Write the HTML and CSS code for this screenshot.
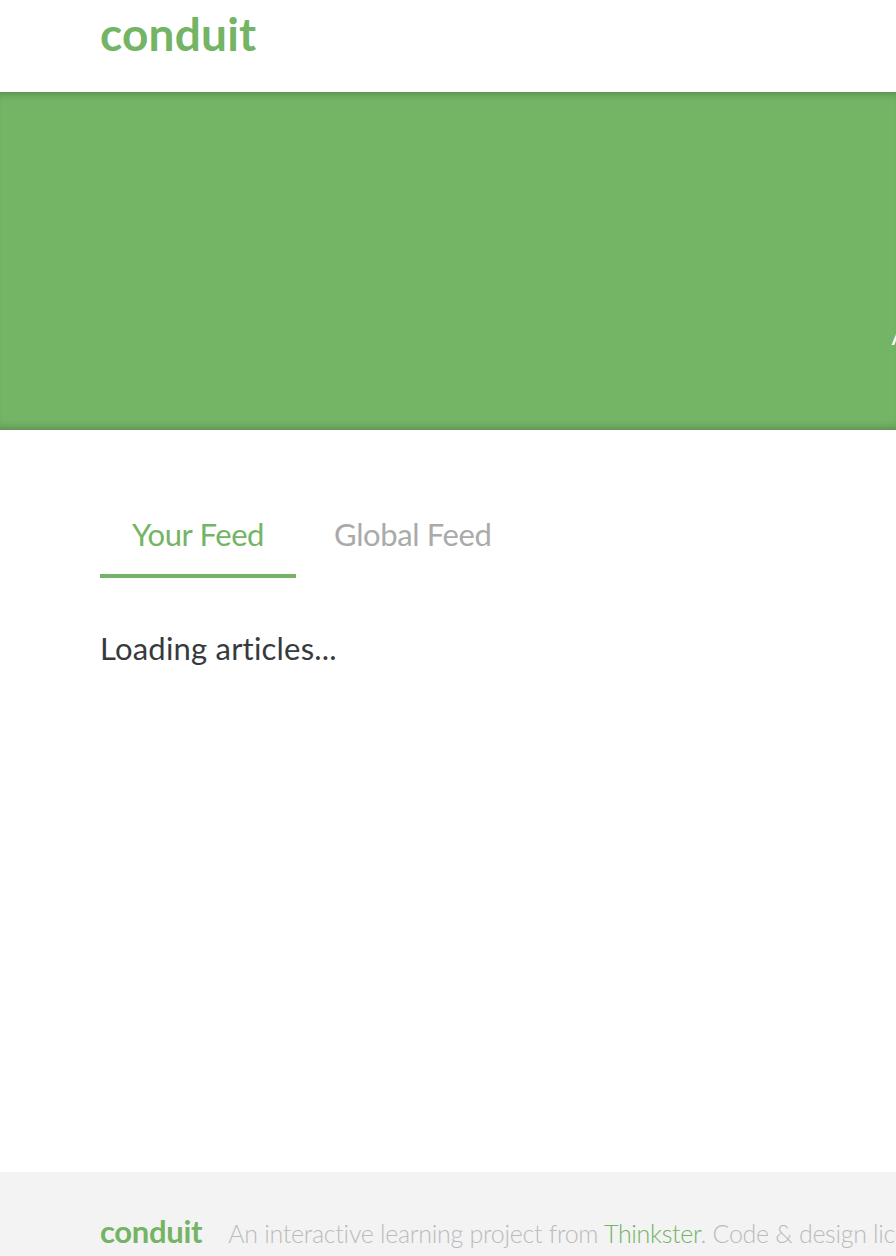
FILE: index.html
```html
<!DOCTYPE html>
<html>
<head>
<meta charset="utf-8">
<title>Conduit</title>
<link rel="stylesheet" href="styles.css">
</head>
<body>
<div class="page">
  <nav class="navbar">
    <a class="brand" href="#">conduit</a>
  </nav>
  <section class="banner">
    <p class="tagline">A place to share your knowledge.</p>
  </section>
  <main class="content">
    <ul class="tabs">
      <li class="tab active">Your Feed</li>
      <li class="tab">Global Feed</li>
    </ul>
    <div class="loading">Loading articles...</div>
  </main>
  <footer class="footer">
    <a class="footer-brand" href="#">conduit</a>
    <span class="attribution">An interactive learning project from <a class="link" href="#">Thinkster</a>. Code &amp; design licensed under MIT.</span>
  </footer>
</div>
</body>
</html>
```

FILE: styles.css
```css
html, body {
  margin: 0;
  padding: 0;
  background: #fff;
  overflow: hidden;
}
body {
  width: 896px;
  height: 1256px;
  font-family: "Lato", "Open Sans", sans-serif;
  color: #373a3c;
}
.page {
  display: flex;
  flex-direction: column;
  height: 1256px;
}
a { text-decoration: none; }

.navbar {
  height: 92px;
  box-sizing: border-box;
  padding-left: 100px;
  display: flex;
  align-items: flex-start;
}
.brand {
  font-family: "Lato", sans-serif;
  font-weight: 700;
  font-size: 46px;
  line-height: 68px;
  color: #73b465;
  letter-spacing: 0.2px;
}

.banner {
  height: 338px;
  flex: 0 0 338px;
  background: #73b465;
  box-shadow: inset 0 8px 8px -8px rgba(0,0,0,.35), inset 0 -8px 8px -8px rgba(0,0,0,.35);
  overflow: hidden;
  box-sizing: border-box;
  padding-top: 206px;
}
.tagline {
  margin: 0 0 0 891px;
  white-space: nowrap;
  color: #fff;
  font-size: 46px;
  line-height: 60px;
  font-weight: 300;
}

.content {
  flex: 1;
  padding: 0 0 0 100px;
}
.tabs {
  list-style: none;
  margin: 72px 0 0 0;
  padding: 0;
  display: flex;
}
.tab {
  font-size: 31px;
  line-height: 40px;
  padding: 12px 32px 20px 32px;
  color: #aaa;
  border-bottom: 4px solid transparent;
  letter-spacing: -0.4px;
}
.tab.active {
  color: #73b465;
  border-bottom-color: #73b465;
}
.tab + .tab { margin-left: 6px; }
.loading {
  margin-top: 50px;
  font-size: 31px;
  line-height: 40px;
  color: #373a3c;
  letter-spacing: 0.2px;
}

.footer {
  flex: 0 0 84px;
  background: #f3f3f3;
  padding: 40px 0 0 100px;
  box-sizing: border-box;
  display: flex;
  align-items: baseline;
  white-space: nowrap;
  overflow: hidden;
}
.footer-brand {
  font-weight: 700;
  font-size: 31px;
  color: #73b465;
  letter-spacing: -0.3px;
  margin-right: 26px;
}
.attribution {
  font-size: 25px;
  font-weight: 300;
  color: #bbb;
  letter-spacing: -0.3px;
}
.link { color: #73b465; }
```
